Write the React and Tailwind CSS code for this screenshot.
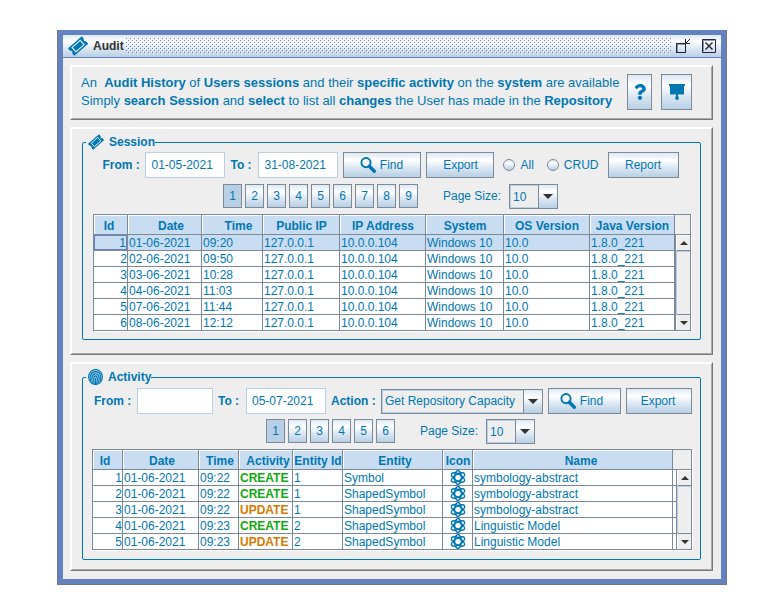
import React from "react";
import { FaQuestion } from "react-icons/fa";

const FILL = "bg-[linear-gradient(#dde8f3,#ffffff_30%,#dde8f3_60%,#b8cfe5)]";

function TicketIcon({ className }) {
  return (
    <svg className={`shrink-0 ${className}`} viewBox="0 0 20 20">
      <g transform="rotate(-41 10 10)">
        <path d="M.8 5.2h18.4v3.2a1.8 1.8 0 0 0 0 3.4v3.2H.8v-3.2a1.8 1.8 0 0 0 0-3.4z" fill="currentColor" />
        <path d="M4.6 7.2h10.8v5.8H4.6z" fill="none" stroke="#e8f4fb" strokeWidth="1.1" />
      </g>
    </svg>
  );
}

function FingerprintIcon() {
  return (
    <svg className="h-4 w-[15px] shrink-0" viewBox="0 0 15 16" fill="none" stroke="currentColor" strokeWidth="1.1">
      <ellipse cx="7.5" cy="8" rx="6.9" ry="7.5" fill="#a5cde4" />
      <path d="M2.4 12.2C1.6 7 3 2.7 7.5 2.6s6 4 5 9.6" />
      <path d="M4.4 14C3.2 9 4 4.8 7.5 4.7s4.300 4 3 9.300" />
      <path d="M6.300 15C5.300 11 5.400 7 7.500 6.900s2.300 4 1.100 8.100" />
      <path d="M7.500 9v6" />
    </svg>
  );
}

function SearchIcon() {
  return (
    <svg className="h-4 w-4 shrink-0" viewBox="0 0 16 16" fill="none" stroke="currentColor">
      <circle cx="6" cy="5.6" r="4.6" strokeWidth="1.9" />
      <path d="M9.4 9.2 14.3 14.2" strokeWidth="3.4" strokeLinecap="round" />
    </svg>
  );
}

function ScreenIcon() {
  return (
    <svg className="h-4 w-4" viewBox="0 0 16 16" fill="currentColor">
      <path d="M0 0h16v2h-1v8.500H1V2H0z" />
      <path d="M7 10h2v3H7z" />
      <circle cx="8" cy="14" r="1.9" />
    </svg>
  );
}

function AtomIcon() {
  return (
    <svg className="mx-auto block h-[15px] w-4" viewBox="0 0 16 15" fill="none" stroke="currentColor" strokeWidth="1.4">
      <ellipse cx="8" cy="7.5" rx="3.400" ry="6.900" />
      <ellipse cx="8" cy="7.5" rx="3.400" ry="7.400" transform="rotate(60 8 7.5)" />
      <ellipse cx="8" cy="7.5" rx="3.400" ry="7.400" transform="rotate(-60 8 7.5)" />
    </svg>
  );
}

function TitleGrip() {
  return (
    <svg className="mr-1 ml-0.5 h-4 min-w-0 flex-1" shapeRendering="crispEdges" aria-hidden="true">
      <defs>
        <pattern id="bumps" width="4" height="4" patternUnits="userSpaceOnUse">
          <path d="M0 0h1v1H0zM2 2h1v1H2z" fill="#6382bf" />
          <path d="M1 1h1v1H1zM3 3h1v1H3z" fill="#ffffff" />
        </pattern>
      </defs>
      <rect width="100%" height="100%" fill="url(#bumps)" />
    </svg>
  );
}

function Button({ className, children, ...rest }) {
  return (
    <button
      type="button"
      className={`flex shrink-0 items-center justify-center gap-1 border border-[#7a8a99] ${FILL} ${className}`}
      {...rest}
    >
      {children}
    </button>
  );
}

function DateField({ id, label, labelWidth, width, value }) {
  return (
    <>
      <label htmlFor={id} className={`${labelWidth} shrink-0 whitespace-nowrap font-bold`}>
        {label}
      </label>
      <input
        id={id}
        type="text"
        defaultValue={value}
        className={`h-[26px] ${width} shrink-0 border border-[#b8cfe5] bg-white px-[5px] outline-none`}
      />
    </>
  );
}

function Combo({ id, width, value }) {
  return (
    <div className={`relative h-[25px] ${width} shrink-0 border border-[#7a8a99]`}>
      <select
        id={id}
        defaultValue={value}
        className="block h-full w-full appearance-none border border-[#b8cfe5] bg-[#eeeeee] pr-5 pl-0.5 outline-none"
      >
        <option>{value}</option>
      </select>
      <span
        className={`pointer-events-none absolute inset-y-0 right-0 flex w-[19px] items-center justify-center border-l border-[#7a8a99] ${FILL}`}
      >
        <svg className="h-[5px] w-[10px]" viewBox="0 0 10 5" fill="#333333">
          <path d="M0 0h10L5 5z" />
        </svg>
      </span>
    </div>
  );
}

function Pager({ id, pages, className }) {
  return (
    <div className={`flex justify-center ${className}`}>
      <nav className="flex gap-[3px]">
        {pages.map((n) => (
          <button
            key={n}
            type="button"
            className={`h-6 w-[19px] border border-[#7a8a99] ${n === 1 ? "bg-[#b8cfe5]" : FILL}`}
          >
            {n}
          </button>
        ))}
      </nav>
      <label htmlFor={id} className="ml-[25px] w-[66px] shrink-0 whitespace-nowrap leading-[25px]">
        Page Size:
      </label>
      <Combo id={id} width="w-[49px]" value="10" />
    </div>
  );
}

function Scroll() {
  return (
    <div className="flex w-4 shrink-0 flex-col border-r border-b border-[#7a8a99]">
      <div className="h-5 border-b border-[#7a8a99] bg-[#eeeeee]" />
      <div className="flex flex-1 flex-col border-l border-[#7a8a99] bg-[#eeeeee]">
        <button type="button" aria-label="Scroll up" className="flex h-4 items-center justify-center border-t border-b border-l border-t-white border-b-[#7a8a99] border-l-white">
          <svg className="h-1 w-2" viewBox="0 0 8 4" fill="#333333">
            <path d="M0 4h8L4 0z" />
          </svg>
        </button>
        <div className="flex-1 border-t border-l border-[#b8cfe5]" />
        <button type="button" aria-label="Scroll down" className="flex h-4 items-center justify-center border-t border-l border-t-[#7a8a99] border-l-white">
          <svg className="h-1 w-2" viewBox="0 0 8 4" fill="#333333">
            <path d="M0 0h8L4 4z" />
          </svg>
        </button>
      </div>
    </div>
  );
}

function DataTable({ columns, rows, selected, tail }) {
  return (
    <div className="flex border-t border-l border-[#7a8a99] shadow-[1px_1px_0_#ffffff]">
      <table className="min-w-0 flex-1 table-fixed border-separate border-spacing-0 bg-white">
        <colgroup>
          {columns.map((c) => (
            <col key={c.name} className={c.width} />
          ))}
        </colgroup>
        <thead>
          <tr>
            {columns.map((c) => (
              <th key={c.name} className="h-5 border-r border-b border-[#7a8a99] p-0">
                <div className={`h-[19px] overflow-hidden border-t border-l border-white bg-[#c8ddf2] leading-[20px] whitespace-nowrap ${c.head || ""}`}>
                  {c.name}
                </div>
              </th>
            ))}
          </tr>
        </thead>
        <tbody>
          {rows.map((r, i) => (
            <tr key={i} className={i === selected ? "bg-[#c8ddf2]" : "bg-white"}>
              {r.map((v, j) => (
                <td key={j} className="h-4 border-r border-b border-[#7a8a99] p-0">
                  <div
                    className={`flex h-[15px] items-center overflow-hidden whitespace-nowrap ${j === 0 ? "justify-end" : "pl-px"} ${
                      i === selected && j === 0 ? "border border-[#6382bf]" : ""
                    }`}
                  >
                    {v}
                  </div>
                </td>
              ))}
            </tr>
          ))}
        </tbody>
      </table>
      {tail && (
        <div className="flex w-[3px] flex-col">
          <div className="h-5 border-b border-[#7a8a99] bg-[#eeeeee]" />
          {rows.map((r, i) => (
            <div key={i} className="h-4 border-b border-[#7a8a99] bg-white" />
          ))}
        </div>
      )}
      <Scroll />
    </div>
  );
}

function Panel({ className, children }) {
  return (
    <section className="border border-t-white border-r-[#777777] border-b-[#777777] border-l-white">
      <div className={`border border-t-white border-r-[#aaaaaa] border-b-[#aaaaaa] border-l-white ${className}`}>
        {children}
      </div>
    </section>
  );
}

function Group({ icon, title, className, children }) {
  return (
    <fieldset className={`min-w-0 rounded-[2px] border border-[#0077b3] px-[3px] ${className}`}>
      <legend className="flex h-4 items-center gap-[5px] pl-0.5 font-bold">
        {icon}
        {title}
      </legend>
      {children}
    </fieldset>
  );
}

const sessionColumns = [
  { name: "Id", width: "w-[34px]", head: "pr-1" },
  { name: "Date", width: "w-[74px]", head: "pl-3" },
  { name: "Time", width: "w-[61px]", head: "pl-3" },
  { name: "Public IP", width: "w-[77px]" },
  { name: "IP Address", width: "w-[86px]" },
  { name: "System", width: "w-[78px]" },
  { name: "OS Version", width: "w-[86px]" },
  { name: "Java Version", width: "w-auto" },
];

const sessions = [
  ["1", "01-06-2021", "09:20"],
  ["2", "02-06-2021", "09:50"],
  ["3", "03-06-2021", "10:28"],
  ["4", "04-06-2021", "11:03"],
  ["5", "07-06-2021", "11:44"],
  ["6", "08-06-2021", "12:12"],
].map((r) => [...r, "127.0.0.1", "10.0.0.104", "Windows 10", "10.0", "1.8.0_221"]);

const activityColumns = [
  { name: "Id", width: "w-[30px]", head: "pr-1.5" },
  { name: "Date", width: "w-[76px]", head: "pl-0.5" },
  { name: "Time", width: "w-[40px]", head: "pl-0.5" },
  { name: "Activity", width: "w-[54px]", head: "pl-1" },
  { name: "Entity Id", width: "w-[50px]" },
  { name: "Entity", width: "w-[100px]", head: "pl-1" },
  { name: "Icon", width: "w-[30px]" },
  { name: "Name", width: "w-auto", head: "pl-4" },
];

const activities = [
  ["1", "09:22", "CREATE", "1", "Symbol", "symbology-abstract"],
  ["2", "09:22", "CREATE", "1", "ShapedSymbol", "symbology-abstract"],
  ["3", "09:22", "UPDATE", "1", "ShapedSymbol", "symbology-abstract"],
  ["4", "09:23", "CREATE", "2", "ShapedSymbol", "Linguistic Model"],
  ["5", "09:23", "UPDATE", "2", "ShapedSymbol", "Linguistic Model"],
].map(([id, time, kind, entityId, entity, name]) => [
  id,
  "01-06-2021",
  time,
  <span className={`font-bold ${kind === "CREATE" ? "text-[#10aa10]" : "text-[#d67800]"}`}>{kind}</span>,
  entityId,
  entity,
  <AtomIcon />,
  name,
]);

export default function App() {
  return (
    <div className="bg-white px-[57px] py-[30px] font-['Liberation_Sans',Arial,sans-serif] text-[12px] leading-4 text-[#0077b3]">
      <main className="border border-t-[#6382bf] border-r-[#777777] border-b-[#777777] border-l-[#777777]">
        <div className="border-x-[5px] border-t-4 border-b-[5px] border-[#6382bf] bg-[#eeeeee]">
          <header className={`flex h-[23px] items-center border-b border-[#6382bf] pr-1 pl-[5px] ${FILL}`}>
            <TicketIcon className="h-5 w-5" />
            <h1 className="ml-[5px] font-bold text-[#333333]">Audit</h1>
            <TitleGrip />
            <button type="button" aria-label="Restore" className="h-4 w-4 shrink-0">
              <svg viewBox="0 0 16 16" fill="none" shapeRendering="crispEdges">
                <path d="M1.500 5.500h9v9h-9z" stroke="#22223a" />
                <path d="M2.500 13.500v-7h7" stroke="#8a9ab5" />
                <path d="M10 1h1v4h4v1h-5zM11 4h1v1h-1zM12 3h1v1h-1zM13 2h1v1h-1zM14 1h1v1h-1z" fill="#22223a" />
              </svg>
            </button>
            <button type="button" aria-label="Close" className="ml-2.5 h-4 w-4 shrink-0">
              <svg viewBox="0 0 16 16" fill="none" stroke="#22223a">
                <path d="M1.500 1.500h13v13h-13z" />
                <path d="M2.500 13.500v-11h11" stroke="#8a9ab5" />
                <path d="M4.500 4.500l7 7M11.500 4.500l-7 7" strokeWidth="1.400" />
              </svg>
            </button>
          </header>

          <div className="flex flex-col gap-[7px] pt-[7px] pr-2 pb-2 pl-[7px]">
            <Panel className="flex items-start justify-between pt-[7px] pr-[19px] pb-2 pl-[9px]">
              <p className="text-[13px] leading-[18px] whitespace-nowrap">
                An&nbsp; <b>Audit History</b> of <b>Users sessions</b> and their <b>specific activity</b> on the{" "}
                <b>system</b> are available
                <br />
                Simply <b>search Session</b> and <b>select</b> to list all <b>changes</b> the User has made in the{" "}
                <b>Repository</b>
              </p>
              <div className="flex gap-[9px]">
                <Button className="h-9 w-[25px]" aria-label="Help">
                  <FaQuestion className="h-4 w-3" />
                </Button>
                <Button className="h-9 w-[31px]" aria-label="Presentation">
                  <ScreenIcon />
                </Button>
              </div>
            </Panel>

            <Panel className="px-2.5 pt-[5px] pb-[13px]">
              <Group title="Session" className="pt-0.5 pb-2" icon={<TicketIcon className="h-4 w-4" />}>
                <form className="flex items-center justify-center gap-[5px] pr-0.5">
                  <DateField id="session-from" label="From :" labelWidth="w-[38px]" width="w-20" value="01-05-2021" />
                  <DateField id="session-to" label="To :" labelWidth="w-[23px]" width="w-20" value="31-08-2021" />
                  <Button className="h-[26px] w-[78px] pr-0.5">
                    <SearchIcon />
                    Find
                  </Button>
                  <Button className="h-[26px] w-[68px]">Export</Button>
                  {["All", "CRUD"].map((name) => (
                    <label key={name} className="flex items-center gap-[5px] px-1">
                      <input
                        type="radio"
                        name="scope"
                        className={`h-3 w-3 appearance-none rounded-full border border-[#7a8a99] ${FILL}`}
                      />
                      {name}
                    </label>
                  ))}
                  <Button className="h-[26px] w-[71px]">Report</Button>
                </form>
                <Pager id="session-size" pages={[1, 2, 3, 4, 5, 6, 7, 8, 9]} className="pt-1.5 pr-0.5 pb-[5px]" />
                <div className="pr-1.5 pl-[7px]">
                  <DataTable columns={sessionColumns} rows={sessions} selected={0} />
                </div>
              </Group>
            </Panel>

            <Panel className="px-2.5 pt-[5px] pb-[9px]">
              <Group title="Activity" className="pt-[3px] pb-[9px]" icon={<FingerprintIcon />}>
                <form className="flex items-center justify-center gap-[5px] pl-[3px]">
                  <DateField id="activity-from" label="From :" labelWidth="w-[38px]" width="w-[76px]" value="" />
                  <DateField id="activity-to" label="To :" labelWidth="w-[23px]" width="w-20" value="05-07-2021" />
                  <label htmlFor="action" className="w-[45px] shrink-0 whitespace-nowrap font-bold">
                    Action :
                  </label>
                  <Combo id="action" width="w-[162px]" value="Get Repository Capacity" />
                  <Button className="h-[26px] w-[73px] pr-1.5">
                    <SearchIcon />
                    Find
                  </Button>
                  <Button className="h-[26px] w-[66px] pr-0.5">Export</Button>
                </form>
                <Pager id="activity-size" pages={[1, 2, 3, 4, 5, 6]} className="py-[5px] pl-[18px]" />
                <div className="pr-[5px] pl-1.5">
                  <DataTable columns={activityColumns} rows={activities} tail />
                </div>
              </Group>
            </Panel>
          </div>
        </div>
      </main>
    </div>
  );
}
